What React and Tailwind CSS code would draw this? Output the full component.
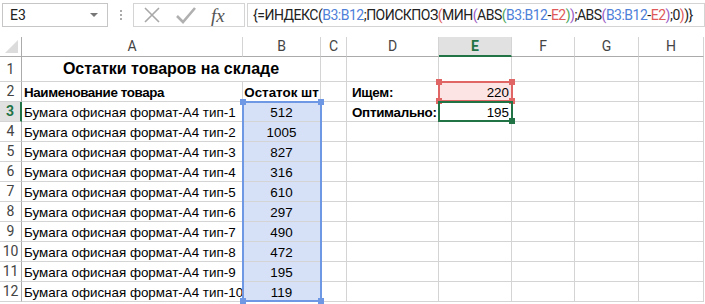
import React from "react";

const UI = { fontFamily: 'Roboto, "Noto Sans", sans-serif' };
const CELL = { fontFamily: '"Liberation Sans", Arial, sans-serif' };

const BLUE = "#4f81d9";
const RED = "#e05a5a";
const PURPLE = "#9a5bc5";
const GREEN = "#4aa45a";

const formula = [
  ["{=ИНДЕКС(", null],
  ["B3:B12", BLUE],
  [";ПОИСКПОЗ", null],
  ["(", RED],
  ["МИН", null],
  ["(", PURPLE],
  ["ABS", null],
  ["(", GREEN],
  ["B3:B12", BLUE],
  ["-", null],
  ["E2", RED],
  [")", GREEN],
  [")", PURPLE],
  [";ABS", null],
  ["(", PURPLE],
  ["B3:B12", BLUE],
  ["-", null],
  ["E2", RED],
  [")", PURPLE],
  [";0", null],
  [")", RED],
  [")}", null],
];

const stock = [512, 1005, 827, 316, 610, 297, 490, 472, 195, 119];
const letters = ["A", "B", "C", "D", "E", "F", "G", "H"];

function Handle({ className, color }) {
  return <div className={`absolute w-[6px] h-[6px] ${className}`} style={{ background: color }} />;
}

function FormulaBar() {
  return (
    <div className="flex items-start h-[37px] pt-[3px] pl-[2px]" style={UI}>
      <div className="relative w-[106px] h-[24px] border border-[#c6c6c6] bg-white flex items-center pl-[7px] text-[14px] text-[#222]">
        E3
        <div className="absolute right-[9px] top-[9px] w-0 h-0 border-l-[4px] border-r-[4px] border-t-[4px] border-l-transparent border-r-transparent border-t-[#777]" />
      </div>
      <div className="w-[25px] h-[24px] flex flex-col items-center justify-center gap-[2px]">
        <div className="w-[2px] h-[2px] bg-[#aaa]" />
        <div className="w-[2px] h-[2px] bg-[#aaa]" />
        <div className="w-[2px] h-[2px] bg-[#aaa]" />
      </div>
      <div className="w-[112px] h-[24px] border border-[#d4d4d4] bg-white flex items-center">
        <svg width="20" height="20" viewBox="0 0 20 20" className="ml-[8px]">
          <path d="M3 3 L17 17 M17 3 L3 17" stroke="#a8a8a8" strokeWidth="1.6" fill="none" />
        </svg>
        <svg width="22" height="20" viewBox="0 0 22 20" className="ml-[13px]">
          <path d="M2 11 L8 17 L20 3" stroke="#b0b0b0" strokeWidth="2.6" fill="none" />
        </svg>
        <span className="ml-[14px] text-[19px] italic text-[#555] leading-none" style={{ fontFamily: '"Liberation Serif", serif' }}>
          fx
        </span>
      </div>
      <div className="ml-[2px] flex-1 h-[24px] border border-[#d4d4d4] bg-white flex items-center pl-[5px] text-[14px] tracking-[-0.5px] text-[#222] whitespace-nowrap overflow-hidden">
        {formula.map(([t, c], i) => (
          <span key={i} style={c ? { color: c } : undefined}>{t}</span>
        ))}
      </div>
    </div>
  );
}

function Cell({ children, className = "" }) {
  return <div className={`border-r border-b border-[#d4d4d4] flex items-end pb-[2px] px-[2px] text-[13.4px] text-black leading-none whitespace-nowrap ${className}`} style={CELL}>{children}</div>;
}

function RowHead({ n, active }) {
  return (
    <div
      className={`border-b border-[#d4d4d4] flex items-center justify-center text-[14px] ${active ? "bg-[#e1e1e1] text-[#217346] font-bold border-r-2 border-r-[#217346]" : "border-r border-r-[#ababab] text-[#444]"}`}
      style={UI}
    >
      {n}
    </div>
  );
}

export default function App() {
  const rows = [];
  for (let r = 3; r <= 12; r++) {
    const i = r - 3;
    rows.push(
      <React.Fragment key={r}>
        <RowHead n={r} active={r === 3} />
        <Cell>Бумага офисная формат-А4 тип-{i + 1}</Cell>
        <Cell className="justify-center bg-[#d6e0f6]">{stock[i]}</Cell>
        <Cell />
        <Cell className="font-bold tracking-[-0.3px] pl-[5px]">{r === 3 ? "Оптимально:" : ""}</Cell>
        <Cell className="justify-end">{r === 3 ? "195" : ""}</Cell>
        <Cell />
        <Cell />
        <Cell />
      </React.Fragment>
    );
  }

  return (
    <div className="w-[705px] h-[304px] bg-white overflow-hidden">
      <FormulaBar />
      <div className="relative grid grid-cols-[22px_221px_78px_26px_92px_73px_63px_64px_65px] grid-rows-[20px_25px_repeat(11,20px)]">
        <div className="relative border-r border-b border-[#ababab]">
          <div className="absolute right-[3px] bottom-[3px] w-0 h-0" style={{ borderBottom: "13px solid #dcdcdc", borderLeft: "13px solid transparent" }} />
        </div>
        {letters.map((l) => (
          <div
            key={l}
            className={`flex items-center justify-center text-[14px] ${l === "E" ? "bg-[#e1e1e1] text-[#217346] font-bold border-r border-r-[#d4d4d4] border-b-2 border-b-[#217346]" : "text-[#444] border-r border-r-[#d4d4d4] border-b border-b-[#ababab]"}`}
            style={UI}
          >
            {l}
          </div>
        ))}

        <RowHead n={1} />
        <Cell className="col-span-2 justify-center text-[16px] font-bold pb-[4px]">Остатки товаров на складе</Cell>
        <Cell />
        <Cell />
        <Cell />
        <Cell />
        <Cell />
        <Cell />

        <RowHead n={2} />
        <Cell className="font-bold tracking-[-0.4px]">Наименование товара</Cell>
        <Cell className="font-bold justify-center">Остаток шт</Cell>
        <Cell />
        <Cell className="font-bold tracking-[-0.3px] pl-[5px]">Ищем:</Cell>
        <Cell className="justify-end bg-[#fce4e4]">220</Cell>
        <Cell />
        <Cell />
        <Cell />

        {rows}

        <div className="absolute left-[242px] top-[64px] w-[80px] h-[201px] border-2 border-[#6f98e4] pointer-events-none">
          <Handle color="#6f98e4" className="-left-[4px] -top-[4px]" />
          <Handle color="#6f98e4" className="-right-[4px] -top-[4px]" />
          <Handle color="#6f98e4" className="-left-[4px] -bottom-[4px]" />
          <Handle color="#6f98e4" className="-right-[4px] -bottom-[4px]" />
        </div>
        <div className="absolute left-[438px] top-[44px] w-[75px] h-[21px] border-2 border-[#e06666] pointer-events-none">
          <Handle color="#e06666" className="-left-[4px] -top-[4px]" />
          <Handle color="#e06666" className="-right-[4px] -top-[4px]" />
          <Handle color="#e06666" className="-left-[4px] -bottom-[4px]" />
          <Handle color="#e06666" className="-right-[4px] -bottom-[4px]" />
        </div>
        <div className="absolute left-[438px] top-[64px] w-[75px] h-[21px] border-2 border-[#217346] pointer-events-none">
          <Handle color="#217346" className="-right-[4px] -bottom-[4px]" />
        </div>
      </div>
    </div>
  );
}
